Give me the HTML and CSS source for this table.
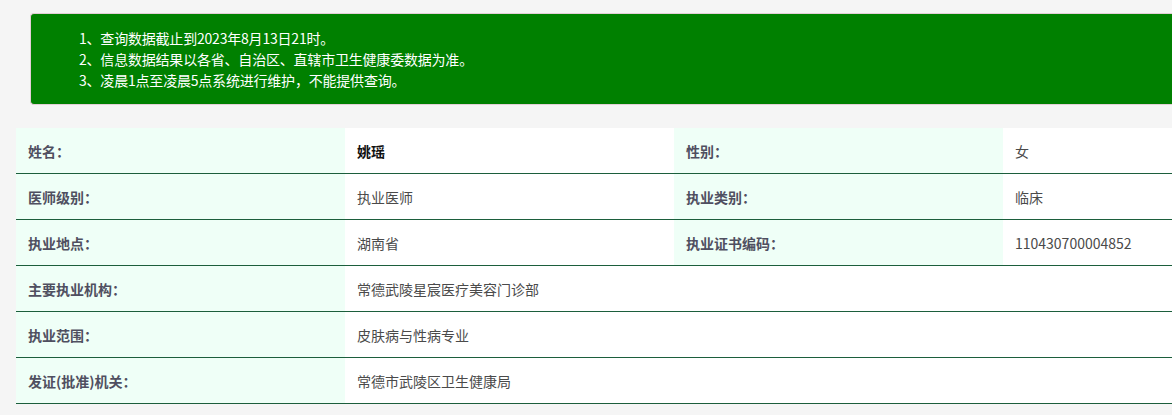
FILE: index.html
```html
<!DOCTYPE html>
<html lang="zh-CN">
<head>
<meta charset="utf-8">
<title>查询结果</title>
<link rel="stylesheet" href="styles.css">
</head>
<body>
<div class="page">
  <div class="notice">
    <p>1、查询数据截止到2023年8月13日21时。</p>
    <p>2、信息数据结果以各省、自治区、直辖市卫生健康委数据为准。</p>
    <p>3、凌晨1点至凌晨5点系统进行维护，不能提供查询。</p>
  </div>
  <div class="info">
    <div class="row">
      <div class="label">姓名：</div>
      <div class="value strong">姚瑶</div>
      <div class="label">性别：</div>
      <div class="value">女</div>
    </div>
    <div class="row">
      <div class="label">医师级别：</div>
      <div class="value">执业医师</div>
      <div class="label">执业类别：</div>
      <div class="value">临床</div>
    </div>
    <div class="row">
      <div class="label">执业地点：</div>
      <div class="value">湖南省</div>
      <div class="label">执业证书编码：</div>
      <div class="value">110430700004852</div>
    </div>
    <div class="row">
      <div class="label">主要执业机构：</div>
      <div class="value wide">常德武陵星宸医疗美容门诊部</div>
    </div>
    <div class="row">
      <div class="label">执业范围：</div>
      <div class="value wide">皮肤病与性病专业</div>
    </div>
    <div class="row">
      <div class="label">发证(批准)机关：</div>
      <div class="value wide">常德市武陵区卫生健康局</div>
    </div>
  </div>
</div>
</body>
</html>
```

FILE: styles.css
```css
html, body {
  margin: 0;
  padding: 0;
  background: #f5f5f5;
}
body {
  font-family: "Noto Sans CJK SC", "Noto Sans", sans-serif;
  font-size: 14px;
}
.page {
  padding: 13px 0 0 16px;
}
.notice {
  margin-left: 14px;
  background: #008000;
  border: 1px solid #e3cfd6;
  border-right: none;
  border-radius: 4px 0 0 4px;
  padding: 14px 0 13px 48px;
  color: #fff;
}
.notice p {
  margin: 0;
  line-height: 21px;
  letter-spacing: -0.2px;
}
.info {
  margin-top: 23px;
}
.row {
  display: grid;
  grid-template-columns: 329px 329px 329px 1fr;
  border-bottom: 1px solid #1c5e3c;
  height: 45px;
}
.label, .value {
  display: flex;
  align-items: center;
  padding-left: 12px;
}
.label {
  background: #effff7;
  color: #4f4f60;
  font-weight: bold;
}
.value {
  background: #fff;
  color: #4a4a4a;
}
.value.strong {
  color: #111;
  font-weight: bold;
}
.value.wide {
  grid-column: 2 / 5;
}
```
